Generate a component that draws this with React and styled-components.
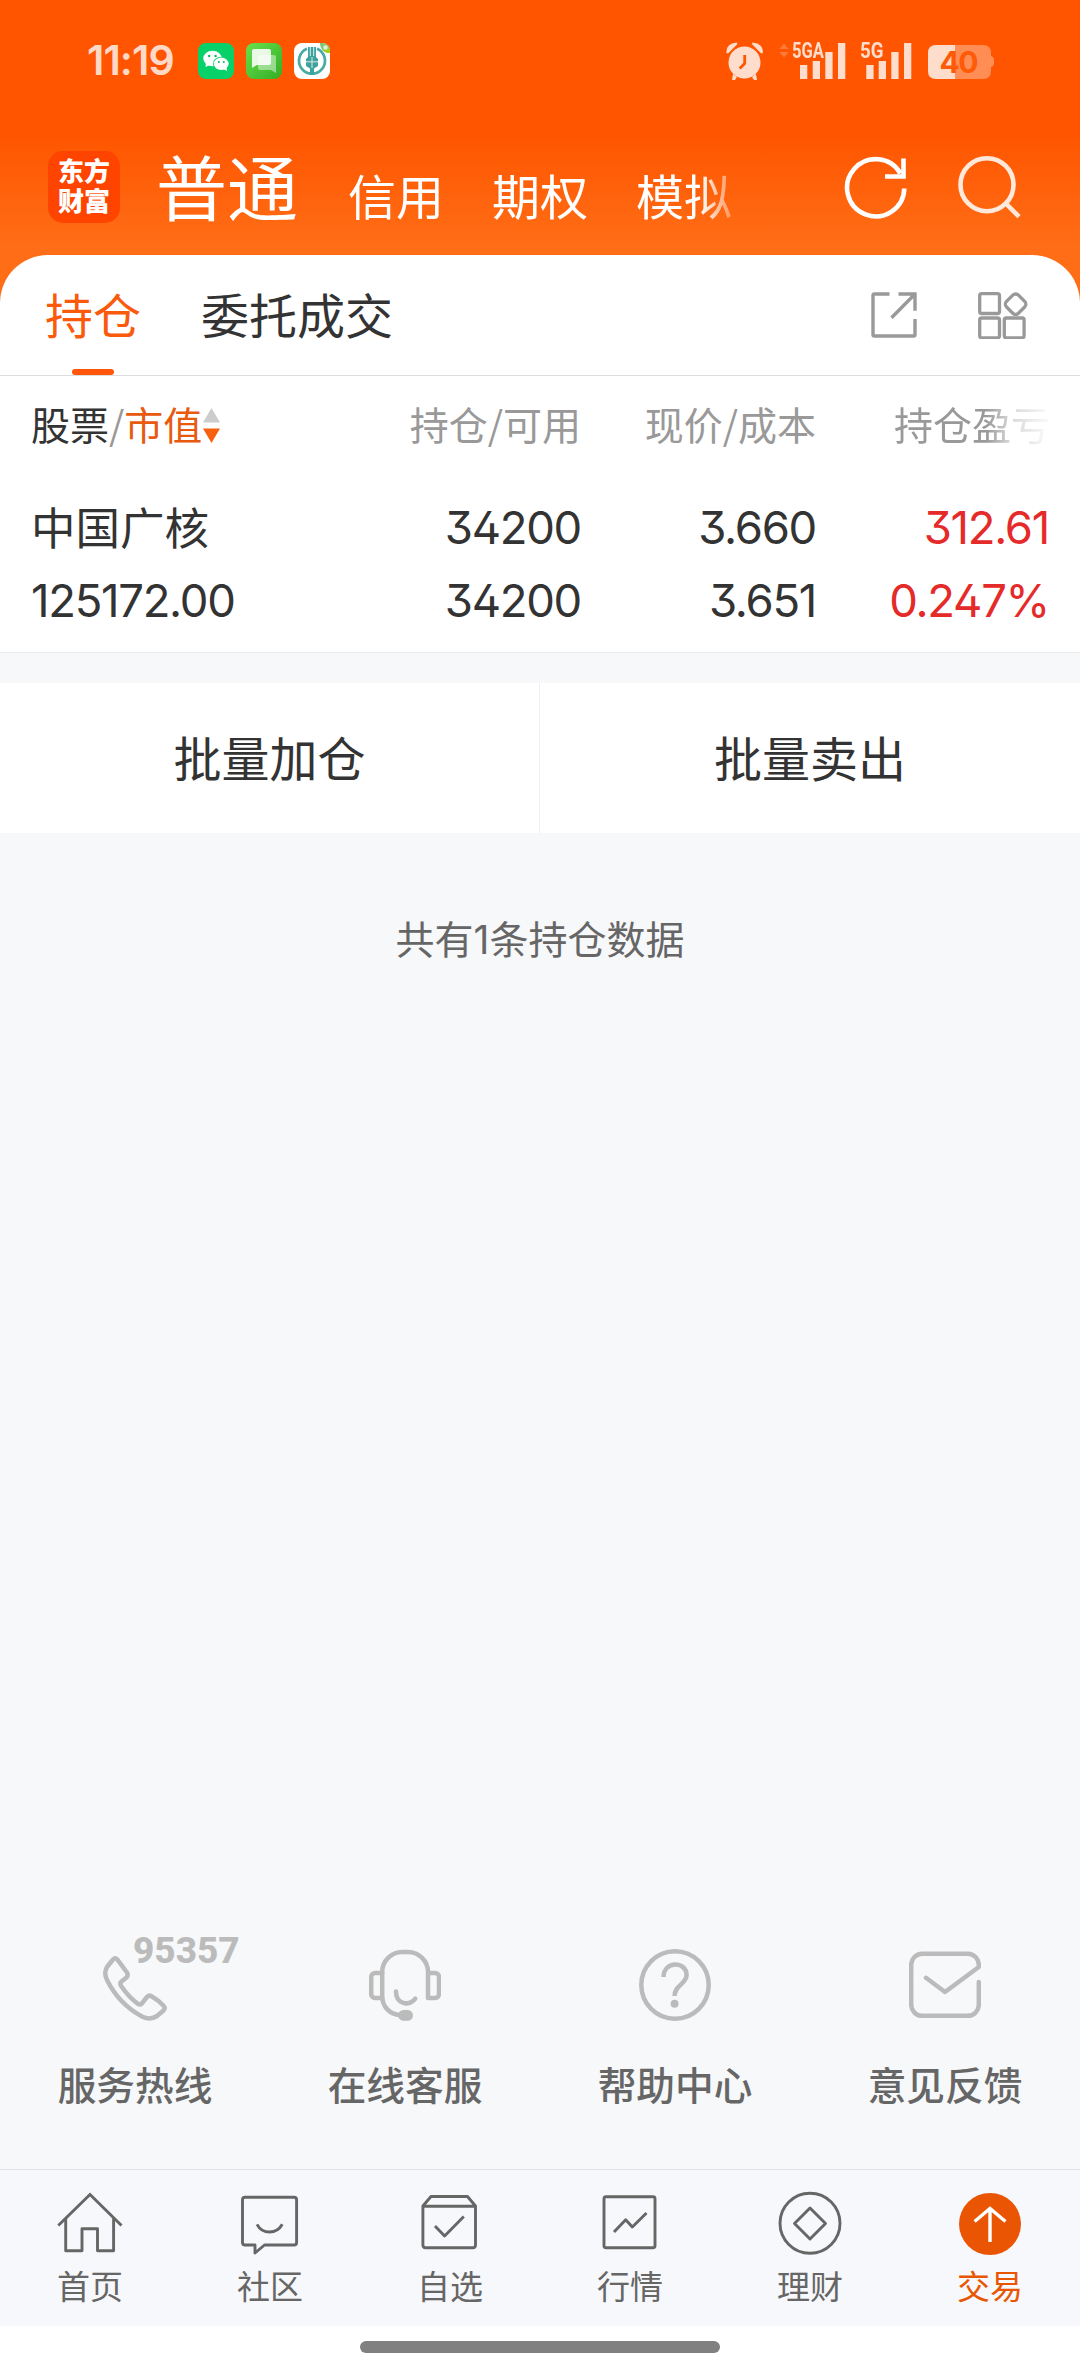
import styled, { createGlobalStyle } from "styled-components";

const GlobalStyle = createGlobalStyle`
  * {
    box-sizing: border-box;
  }
  body {
    margin: 0;
    background: #fff;
    font-family: "Noto Sans CJK SC", sans-serif;
    color: #333;
  }
  svg {
    display: block;
    flex: none;
  }
`;

const Screen = styled.main`
  display: flex;
  flex-direction: column;
  width: 1080px;
  height: 2374px;
  background: #f7f8fa;
`;

const Top = styled.header`
  height: 303px;
  background: linear-gradient(#ff5500 0, #ff5500 133px, #ff6d16 245px, #ff6d16 100%);
`;

const StatusBar = styled.div`
  display: flex;
  align-items: center;
  height: 122px;
  padding: 0 85px 0 87px;
`;

const Clock = styled.span`
  width: 111px;
  padding-bottom: 2px;
  font: 600 41px/1 Inter, sans-serif;
  letter-spacing: -0.9px;
  color: rgba(255, 255, 255, 0.8);
`;

const AppIcons = styled.div`
  display: flex;
  flex: 1;
  gap: 12px;
`;

const Nav = styled.nav`
  display: flex;
  align-items: center;
  height: 133px;
  padding: 0 58px 3px 48px;
`;

const Logo = styled.div`
  width: 72px;
  height: 72px;
  padding-top: 4px;
  border-radius: 15px;
  background: #ff4400;
  color: #fff;
  font-size: 26px;
  font-weight: 900;
  line-height: 30px;
  text-align: center;
`;

const Accounts = styled.div`
  display: flex;
  flex: 1;
  align-items: baseline;
  gap: 48px;
  height: 130px;
  margin-left: 36px;
  overflow: hidden;
  white-space: nowrap;
  mask-image: linear-gradient(to right, #000 544px, transparent 590px);
`;

const Account = styled.span`
  width: ${({ $active }) => ($active ? "144px" : "auto")};
  font-size: ${({ $active }) => ($active ? "71px" : "48px")};
  line-height: 125px;
  color: #fff;
`;

const NavIcons = styled.div`
  display: flex;
  gap: 47px;
`;

const Sheet = styled.section`
  margin-top: -48px;
  border-radius: 48px 48px 0 0;
  background: #fff;
`;

const Tabs = styled.div`
  display: flex;
  align-items: center;
  gap: 60px;
  height: 121px;
  padding: 0 51px 0 45px;
  border-bottom: 1px solid #dddddd;
`;

const Tab = styled.button`
  position: relative;
  height: 120px;
  padding: 0 0 4px;
  border: 0;
  background: none;
  font-family: inherit;
  font-size: 48px;
  line-height: 116px;
  color: ${({ $active }) => ($active ? "#f95a0c" : "#333")};

  &::after {
    content: "";
    display: ${({ $active }) => ($active ? "block" : "none")};
    position: absolute;
    bottom: 0;
    left: 27px;
    width: 42px;
    height: 6px;
    border-radius: 3px;
    background: #ff560c;
  }
`;

const TabTools = styled.div`
  display: flex;
  gap: 59px;
  margin-left: auto;
`;

const Table = styled.div`
  display: grid;
  grid-template-columns: 250px 300px 235px 234px;
  padding: 0 30px 0 31px;
  height: 277px;
  grid-template-rows: 115px 73px 73px;
  border-bottom: 1px solid #e8eaed;
`;

const Heading = styled.div`
  display: flex;
  align-items: center;
  justify-content: ${({ $left }) => ($left ? "flex-start" : "flex-end")};
  height: 98px;
  padding-bottom: 4px;
  font-size: 39px;
  color: #999;
  mask-image: ${({ $faded }) =>
    $faded ? "linear-gradient(to right, #000 170px, rgba(0,0,0,.4) 194px, transparent 238px)" : "none"};

  svg {
    margin: 4px 0 0 1px;
  }
`;

const HeadingText = styled.span`
  color: ${({ $color }) => $color};
`;

const Name = styled.div`
  font-size: 44.5px;
  line-height: 70px;
`;

const Figure = styled.div`
  font: 400 45.5px/73px Inter, sans-serif;
  font-feature-settings: "cv02", "cv09";
  letter-spacing: -1.3px;
  padding-right: ${({ $up }) => ($up ? "1px" : "0")};
  text-align: ${({ $left }) => ($left ? "left" : "right")};
  color: ${({ $up }) => ($up ? "#e52a2a" : "#333")};
`;

const BatchActions = styled.div`
  display: flex;
  height: 150px;
  margin-top: 30px;
  background: #fff;
`;

const BatchButton = styled.button`
  width: 540px;
  padding: 0 0 4px;
  border: 0;
  background: none;
  font-family: inherit;
  font-size: 48px;
  color: #333;

  &:first-child {
    border-right: 1px solid #eeeff1;
  }
`;

const Summary = styled.p`
  flex: 1;
  margin: 79px 0 0;
  text-align: center;
  font-family: Inter, "Noto Sans CJK SC", sans-serif;
  font-size: 39px;
  line-height: 56px;
  color: #666;
`;

const Services = styled.div`
  display: flex;
  height: 220px;
`;

const Service = styled.div`
  position: relative;
  display: flex;
  flex: 1;
  flex-direction: column;
  align-items: center;
  gap: 34px;
  font-size: 38.7px;
  font-weight: 500;
  line-height: 56px;
  color: #666;
`;

const Hotline = styled.span`
  position: absolute;
  top: -16px;
  left: 133px;
  font: 800 37px/36px Roboto, sans-serif;
  color: #bbb;
`;

const TabBar = styled.nav`
  display: flex;
  height: 157px;
  border-top: 1px solid #dfe1e4;
  background: #f7f8fb;
`;

const TabBarItem = styled.div`
  display: flex;
  flex: 1;
  flex-direction: column;
  align-items: center;
  padding-top: 19px;
  font-size: 33px;
  line-height: 48px;
  color: ${({ $active }) => ($active ? "#e85604" : "#666")};

  svg {
    margin-bottom: 6px;
  }
`;

const GestureArea = styled.div`
  height: 48px;
  padding-top: 15px;
  background: #fff;
`;

const GestureBar = styled.div`
  width: 360px;
  height: 12px;
  margin: 0 auto;
  border-radius: 6px;
  background: #808080;
`;

const WechatIcon = () => (
  <svg width="36" height="36" viewBox="0 0 36 36">
    <rect width="36" height="36" rx="8" fill="#07d168" />
    <path d="M8 20l-.5 4 4-2z" fill="#fff" />
    <ellipse cx="14.5" cy="15.5" rx="9.2" ry="7.8" fill="#fff" />
    <ellipse cx="23.2" cy="20.8" rx="8.2" ry="7" fill="#07d168" />
    <ellipse cx="23.2" cy="20.8" rx="7.4" ry="6.2" fill="#fff" />
    <path d="M25 26l4 2-.6-4z" fill="#fff" />
    <g fill="#07b85a">
      <circle cx="11.2" cy="13" r="1.2" />
      <circle cx="17.6" cy="13" r="1.2" />
      <circle cx="20.8" cy="19" r="1" />
      <circle cx="25.8" cy="19" r="1" />
    </g>
  </svg>
);

const MessagesIcon = () => (
  <svg width="36" height="36" viewBox="0 0 36 36">
    <defs>
      <linearGradient id="messages" x1="0" y1="0" x2="1" y2="1">
        <stop offset="0" stopColor="#68e04c" />
        <stop offset="1" stopColor="#33ad25" />
      </linearGradient>
    </defs>
    <rect width="36" height="36" rx="8" fill="url(#messages)" />
    <path d="M14 12h14q2 0 2 2v16l-5-3H14q-2 0-2-2V14q0-2 2-2z" fill="#fff" opacity=".45" />
    <path d="M8 6h15q2 0 2 2v12q0 2-2 2H11l-5 3V8q0-2 2-2z" fill="#fff" opacity=".87" />
  </svg>
);

const BankIcon = () => (
  <svg width="36" height="36" viewBox="0 0 36 36">
    <defs>
      <clipPath id="bank">
        <rect width="36" height="36" rx="8" />
      </clipPath>
    </defs>
    <g clipPath="url(#bank)">
      <rect width="36" height="36" fill="#fff" />
      <path d="M26 0h10v10c-6 0-10-4-10-10z" fill="#7cc576" />
      <path d="M28 7l8-2v5h-3z" fill="#a5cf1c" />
      <circle cx="31.5" cy="4.5" r="2.3" fill="#d6f0d0" />
    </g>
    <path d="M13 5.7A13 13 0 1 0 23 5.7" fill="none" stroke="#4aaba4" strokeWidth="2.7" />
    <path d="M14 4h8v10l2 2v7l-4 2.5V32h-4v-6.5L12 23v-7l2-2z" fill="#3fa29d" />
    <path d="M16.3 4v9M19.7 4v9M12 18.8h12M18 14v11" stroke="#d9efed" strokeWidth="1" />
  </svg>
);

const StatusIcons = () => (
  <svg width="269" height="56" viewBox="726 32 269 56" fill="#fff">
    <g opacity=".8">
      <circle cx="744.5" cy="61.5" r="16" />
      <path d="M726.5 52q-1-9 10-10.5l1 1.5-9.5 9.5zM762.8 52q1-9-10-10.5l-1 1.5 9.5 9.5zM733 73l4 3-2 3h-3zM756 73l-4 3 2 3h3z" />
      <path d="M744.7 54v8.5l-5 5" fill="none" stroke="#ff5500" strokeWidth="2.8" />
      <path d="M800 64h7.3v14H800zM812.7 60h7.3v18h-7.3zM825.3 51h7.3v27h-7.3zM838 42h7.3v36H838z" />
      <path d="M866.3 64h7.3v14h-7.3zM878.7 60h7.3v18h-7.3zM891.3 51h7.3v27h-7.3zM904 42h7.3v36H904z" />
      <g fontFamily="Roboto, sans-serif" fontSize="22" fontWeight="700">
        <text x="792" y="57" textLength="32" lengthAdjust="spacingAndGlyphs">5GA</text>
        <text x="860" y="57" textLength="23.5" lengthAdjust="spacingAndGlyphs">5G</text>
      </g>
    </g>
    <path d="M779.3 48l4.700-5.500 4.700 5.500zM779.300 51h9.400l-4.700 5.500z" opacity=".22" />
    <path d="M955 44h28q8 0 8 8v3q3 1 3 3v5q0 2-3 3v4q0 8-8 8h-28z" opacity=".33" />
    <path d="M955 44v34h-19q-8 0-8-8V52q0-8 8-8z" opacity=".8" />
    <text x="939.5" y="71.8" fill="#ff5a08" fontFamily="Inter, sans-serif" fontSize="30" fontWeight="700" textLength="39">
      40
    </text>
  </svg>
);

const RefreshIcon = () => (
  <svg width="66" height="66" viewBox="0 0 66 66" fill="none" stroke="#fff" strokeWidth="4.6">
    <path d="M61.3 34.5A28.6 28.6 0 1 1 57.5 19.5" />
    <path d="M60.5 4.5V22.5H42" />
  </svg>
);

const SearchIcon = () => (
  <svg width="66" height="66" viewBox="0 0 66 66" fill="none" stroke="#fff" strokeWidth="4.6" opacity=".86">
    <circle cx="31" cy="30.7" r="26.5" />
    <path d="M49.5 49.2L63 62.7" />
  </svg>
);

const ShareIcon = () => (
  <svg width="48" height="48" viewBox="0 0 48 48" fill="none" stroke="#999" strokeWidth="3.4">
    <path d="M19.5 3H4.5Q3 3 3 4.5V43.5Q3 45 4.5 45H43.5Q45 45 45 43.5V28" />
    <path d="M28.5 3H45V19.7M45 3L21.5 26.7" />
  </svg>
);

const GridIcon = () => (
  <svg width="52" height="48" viewBox="0 0 52 48" fill="none" stroke="#999" strokeWidth="3.3">
    <rect x="2.7" y="2.7" width="19.8" height="19.8" rx="2" />
    <rect x="2.7" y="27" width="19.8" height="19.8" rx="2" />
    <rect x="27.3" y="27" width="19.8" height="19.8" rx="2" />
    <rect x="30.2" y="4.8" width="16.8" height="16.8" rx="4" transform="rotate(45 38.6 13.2)" />
  </svg>
);

const SortArrows = () => (
  <svg width="17" height="36" viewBox="0 0 17 36">
    <path d="M8.5 1L17 15.5H0z" fill="#ccc" />
    <path d="M0 21.5h17L8.5 36z" fill="#f8600f" />
  </svg>
);

const ServiceSvg = styled.svg.attrs({ viewBox: "0 0 72 72" })`
  width: 72px;
  height: 72px;
  fill: none;
  stroke: #bbb;
  stroke-width: 4.5px;
  stroke-linecap: round;
  stroke-linejoin: round;
`;

const PhoneIcon = () => (
  <ServiceSvg>
    <path d="M14 10.5Q16.4 8 18.6 10.8L28 23.5Q29.5 26 27.5 28.5L22.5 32.5Q20.5 34.3 22 36.7C27 44 32 50 39 54.8Q41 56.3 43 54.3L47.5 48.5Q49.8 45.5 52.5 47.3Q60 51.5 65 57.3Q66.6 59.3 64.5 61.5L58 67Q51 71.5 43.5 67.7C27 59 15 45 8 31Q4.5 24 8 18Z" />
  </ServiceSvg>
);

const HeadsetIcon = () => (
  <ServiceSvg>
    <path d="M59 24V49H66a4 4 0 0 0 4-4V28a4 4 0 0 0-4-4H59V23a20 20 0 0 0-20-20h-5.8a20 20 0 0 0-20 20V47C13.2 58 21 65.5 31 66" />
    <path d="M13.2 24H6.2a4 4 0 0 0-4 4V45a4 4 0 0 0 4 4h7" />
    <path d="M27 42.5C27 55.5 40 57.5 46.3 49.7" />
    <rect x="31.5" y="63.2" width="10.2" height="6.3" rx="3" fill="#bbb" />
  </ServiceSvg>
);

const HelpIcon = () => (
  <ServiceSvg>
    <circle cx="36" cy="36" r="33.7" />
    <path d="M24.6 28C24.6 20 30 15.5 36.3 15.5C43 15.5 47.6 20 47.6 26C47.6 35 35.6 36 35.6 47" strokeLinecap="butt" />
    <circle cx="35.6" cy="54.7" r="1.7" fill="#bbb" />
  </ServiceSvg>
);

const FeedbackIcon = () => (
  <ServiceSvg>
    <path d="M17 28.8L36 43L69.8 18V15.8a11 11 0 0 0-11-11H13.2a11 11 0 0 0-11 11V55.8a11 11 0 0 0 11 11H58.8a11 11 0 0 0 11-11V33" />
  </ServiceSvg>
);

const TabSvg = styled.svg.attrs({ viewBox: "0 0 66 66" })`
  width: 66px;
  height: 66px;
  fill: none;
  stroke: currentColor;
  stroke-width: 2.9px;
  stroke-linejoin: round;
`;

const HomeIcon = () => (
  <TabSvg>
    <path d="M1.3 36.5L33 5.5L64.5 36.5" strokeLinejoin="miter" />
    <path d="M8.7 29.5V61.7H25V39.7H40.5V61.7H56.6V29.5" />
  </TabSvg>
);

const CommunityIcon = () => (
  <TabSvg>
    <path d="M8 8.3H57Q59.6 8.3 59.6 11V53.5Q59.6 56 57 56H27.5L18 64V56H8Q5.5 56 5.5 53.5V11Q5.5 8.3 8 8.3Z" />
    <path d="M20 35.3Q24 43 32.6 43Q41 43 45.3 35.3" />
  </TabSvg>
);

const WatchlistIcon = () => (
  <TabSvg>
    <path d="M5.9 17L14 7.5H50.5L58.5 17V56Q58.5 58.7 56 58.7H8.5Q5.9 58.7 5.9 56ZM5.9 17.3H58.5" />
    <path d="M18 37L27.6 47L46.8 27.5" />
  </TabSvg>
);

const MarketIcon = () => (
  <TabSvg>
    <rect x="7" y="7.7" width="51" height="51" rx="2" />
    <path d="M17 43L28.7 30.7L35.3 38L49.5 24" />
  </TabSvg>
);

const FinanceIcon = () => (
  <TabSvg>
    <circle cx="33" cy="34.3" r="30" />
    <path d="M33 19L48.5 34.5L33 50L17.5 34.5Z" />
  </TabSvg>
);

const TradeIcon = () => (
  <TabSvg>
    <circle cx="33" cy="35" r="31" fill="#ea5504" stroke="none" />
    <path d="M33 53V20M17.6 32.5L33 19.5L48.5 32.5" stroke="#fff" strokeWidth="3.4" strokeLinejoin="miter" />
  </TabSvg>
);

const services = [
  { label: "服务热线", Icon: PhoneIcon, phone: "95357" },
  { label: "在线客服", Icon: HeadsetIcon },
  { label: "帮助中心", Icon: HelpIcon },
  { label: "意见反馈", Icon: FeedbackIcon },
];

const tabBarItems = [
  { label: "首页", Icon: HomeIcon },
  { label: "社区", Icon: CommunityIcon },
  { label: "自选", Icon: WatchlistIcon },
  { label: "行情", Icon: MarketIcon },
  { label: "理财", Icon: FinanceIcon },
  { label: "交易", Icon: TradeIcon, active: true },
];

const App = () => {
  return (
    <Screen>
      <GlobalStyle />
      <Top>
        <StatusBar>
          <Clock>11:19</Clock>
          <AppIcons>
            <WechatIcon />
            <MessagesIcon />
            <BankIcon />
          </AppIcons>
          <StatusIcons />
        </StatusBar>
        <Nav>
          <Logo>
            东方
            <br />
            财富
          </Logo>
          <Accounts>
            <Account $active>普通</Account>
            <Account>信用</Account>
            <Account>期权</Account>
            <Account>模拟</Account>
          </Accounts>
          <NavIcons>
            <RefreshIcon />
            <SearchIcon />
          </NavIcons>
        </Nav>
      </Top>
      <Sheet>
        <Tabs>
          <Tab $active>持仓</Tab>
          <Tab>委托成交</Tab>
          <TabTools>
            <ShareIcon />
            <GridIcon />
          </TabTools>
        </Tabs>
        <Table>
          <Heading $left>
            <HeadingText $color="#333">股票</HeadingText>/
            <HeadingText $color="#e85a10">市值</HeadingText>
            <SortArrows />
          </Heading>
          <Heading>持仓/可用</Heading>
          <Heading>现价/成本</Heading>
          <Heading $faded>持仓盈亏</Heading>
          <Name>中国广核</Name>
          <Figure>34200</Figure>
          <Figure>3.660</Figure>
          <Figure $up>312.61</Figure>
          <Figure $left>125172.00</Figure>
          <Figure>34200</Figure>
          <Figure>3.651</Figure>
          <Figure $up>0.247%</Figure>
        </Table>
      </Sheet>
      <BatchActions>
        <BatchButton>批量加仓</BatchButton>
        <BatchButton>批量卖出</BatchButton>
      </BatchActions>
      <Summary>共有1条持仓数据</Summary>
      <Services>
        {services.map(({ label, Icon, phone }) => (
          <Service key={label}>
            <Icon />
            {phone && <Hotline>{phone}</Hotline>}
            {label}
          </Service>
        ))}
      </Services>
      <TabBar>
        {tabBarItems.map(({ label, Icon, active }) => (
          <TabBarItem key={label} $active={active}>
            <Icon />
            {label}
          </TabBarItem>
        ))}
      </TabBar>
      <GestureArea>
        <GestureBar />
      </GestureArea>
    </Screen>
  );
};

export default App;
